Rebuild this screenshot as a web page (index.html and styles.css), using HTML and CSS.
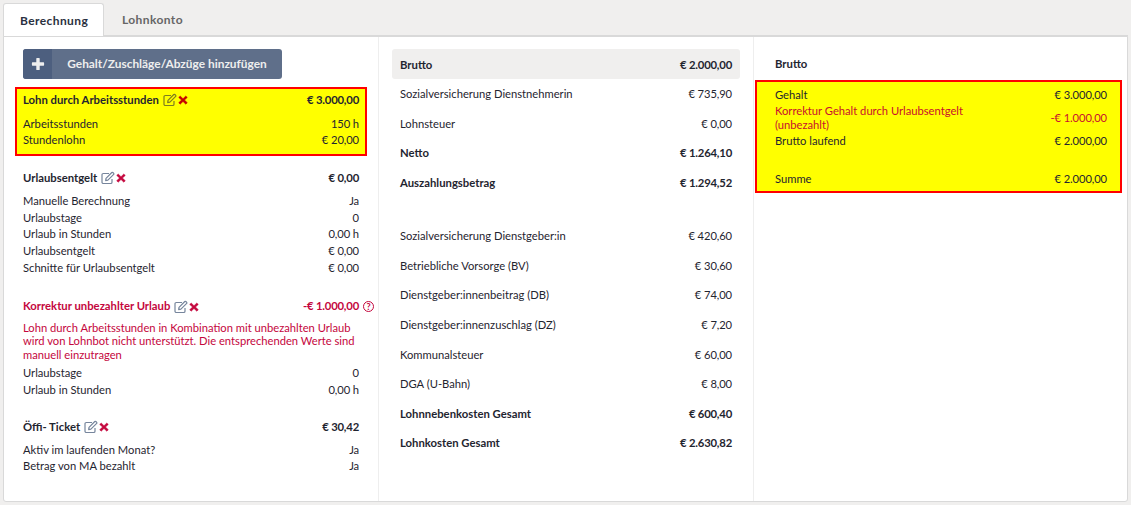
FILE: index.html
```html
<!DOCTYPE html>
<html lang="de">

<head>
    <meta charset="UTF-8">
    <title>Berechnung</title>
    <link rel="stylesheet" href="styles.css">
</head>

<body>
    <svg class="defs" width="0" height="0">
        <symbol id="i-edit" viewBox="0 0 14 14">
            <path d="M11 8v3.2a1.3 1.3 0 0 1-1.3 1.3H2.300A1.300 1.300 0 0 1 1 11.200V3.800a1.300 1.300 0 0 1 1.300-1.300H8" fill="none" stroke="currentColor" stroke-width="1.200"/>
            <path d="M5 7.300 10.800 1.500a.7.700 0 0 1 1 0l.9.900a.7.700 0 0 1 0 1L6.900 9.200 4.700 9.600z" fill="none" stroke="currentColor" stroke-width="1.200" stroke-linejoin="round"/>
        </symbol>
        <symbol id="i-del" viewBox="0 0 10 10">
            <path d="M2.200 1 5 3.700 7.800 1 9.300 2.400 6.500 5.100 9.300 7.700 7.800 9.200 5 6.500 2.200 9.200 .7 7.700 3.500 5.100 .7 2.400z" fill="currentColor" stroke="currentColor" stroke-width=".5" stroke-linejoin="round"/>
        </symbol>
    </svg>

    <div class="tabs">
        <div class="tab active">Berechnung</div>
        <div class="tab">Lohnkonto</div>
    </div>

    <div class="panel">
        <div class="col col-left">
            <button class="add-btn"><span class="add-icon"><svg width="14" height="14" viewBox="0 0 14 14"><path d="M5.300 1.500a.6.600 0 0 1 .6-.6h2.200a.6.600 0 0 1 .6.600v3.800h3.800a.6.600 0 0 1 .6.600v2.200a.6.600 0 0 1-.6.600H8.700v3.800a.6.600 0 0 1-.6.600H5.900a.6.600 0 0 1-.6-.6V8.700H1.500a.6.600 0 0 1-.6-.6V5.900a.6.600 0 0 1 .6-.6h3.800z" fill="#eee"/></svg></span><span class="add-text">Gehalt/Zuschläge/Abzüge hinzufügen</span></button>

            <div class="block mark mark-left">
                <div class="line title">
                    <span class="name">Lohn durch Arbeitsstunden <svg class="ic ic-edit"><use href="#i-edit"/></svg><svg class="ic ic-del"><use href="#i-del"/></svg></span>
                    <span>€ 3.000,00</span>
                </div>
                <div class="line"><span>Arbeitsstunden</span><span>150 h</span></div>
                <div class="line"><span>Stundenlohn</span><span>€ 20,00</span></div>
            </div>

            <div class="block after-mark">
                <div class="line title">
                    <span class="name">Urlaubsentgelt <svg class="ic ic-edit"><use href="#i-edit"/></svg><svg class="ic ic-del"><use href="#i-del"/></svg></span>
                    <span>€ 0,00</span>
                </div>
                <div class="line"><span>Manuelle Berechnung</span><span>Ja</span></div>
                <div class="line"><span>Urlaubstage</span><span>0</span></div>
                <div class="line"><span>Urlaub in Stunden</span><span>0,00 h</span></div>
                <div class="line"><span>Urlaubsentgelt</span><span>€ 0,00</span></div>
                <div class="line"><span>Schnitte für Urlaubsentgelt</span><span>€ 0,00</span></div>
            </div>

            <div class="block">
                <div class="line title red">
                    <span class="name">Korrektur unbezahlter Urlaub <svg class="ic ic-edit"><use href="#i-edit"/></svg><svg class="ic ic-del"><use href="#i-del"/></svg></span>
                    <span>-€ 1.000,00<span class="help">?</span></span>
                </div>
                <p class="note">Lohn durch Arbeitsstunden in Kombination mit unbezahlten Urlaub wird von Lohnbot nicht unterstützt. Die entsprechenden Werte sind manuell einzutragen</p>
                <div class="line"><span>Urlaubstage</span><span>0</span></div>
                <div class="line"><span>Urlaub in Stunden</span><span>0,00 h</span></div>
            </div>

            <div class="block last">
                <div class="line title">
                    <span class="name">Öffi- Ticket <svg class="ic ic-edit"><use href="#i-edit"/></svg><svg class="ic ic-del"><use href="#i-del"/></svg></span>
                    <span>€ 30,42</span>
                </div>
                <div class="line"><span>Aktiv im laufenden Monat?</span><span>Ja</span></div>
                <div class="line"><span>Betrag von MA bezahlt</span><span>Ja</span></div>
            </div>
        </div>

        <div class="col col-mid">
            <div class="row strong first"><span>Brutto</span><span>€ 2.000,00</span></div>
            <div class="row"><span>Sozialversicherung Dienstnehmerin</span><span>€ 735,90</span></div>
            <div class="row"><span>Lohnsteuer</span><span>€ 0,00</span></div>
            <div class="row strong"><span>Netto</span><span>€ 1.264,10</span></div>
            <div class="row strong"><span>Auszahlungsbetrag</span><span>€ 1.294,52</span></div>
            <div class="row-gap"></div>
            <div class="row"><span>Sozialversicherung Dienstgeber:in</span><span>€ 420,60</span></div>
            <div class="row"><span>Betriebliche Vorsorge (BV)</span><span>€ 30,60</span></div>
            <div class="row"><span>Dienstgeber:innenbeitrag (DB)</span><span>€ 74,00</span></div>
            <div class="row"><span>Dienstgeber:innenzuschlag (DZ)</span><span>€ 7,20</span></div>
            <div class="row"><span>Kommunalsteuer</span><span>€ 60,00</span></div>
            <div class="row"><span>DGA (U-Bahn)</span><span>€ 8,00</span></div>
            <div class="row strong"><span>Lohnnebenkosten Gesamt</span><span>€ 600,40</span></div>
            <div class="row strong"><span>Lohnkosten Gesamt</span><span>€ 2.630,82</span></div>
        </div>

        <div class="col col-right">
            <div class="right-head">Brutto</div>
            <div class="mark mark-right">
                <div class="line"><span>Gehalt</span><span>€ 3.000,00</span></div>
                <div class="line wrap red-plain"><span class="wrap-text">Korrektur Gehalt durch Urlaubsentgelt (unbezahlt)</span><span>-€ 1.000,00</span></div>
                <div class="line"><span>Brutto laufend</span><span>€ 2.000,00</span></div>
                <div class="line sum"><span>Summe</span><span>€ 2.000,00</span></div>
            </div>
        </div>
    </div>
</body>

</html>
```

FILE: styles.css
```css
* {
    margin: 0;
    padding: 0;
    box-sizing: border-box;
}

body {
    font-family: "Lato", sans-serif;
    font-size: 11.2px;
    color: #1f2530;
    background: #f0efee;
    padding: 3px 3px 3px 3px;
    height: 505px;
    overflow: hidden;
}

.defs {
    position: absolute;
}

.tabs {
    display: flex;
    height: 33px;
}

.tab {
    padding: 0 18px;
    line-height: 33px;
    font-size: 12px;
    letter-spacing: 0.4px;
    font-weight: 700;
    color: #666;
}

.tab.active {
    width: 101px;
    padding: 0 16px;
    background: #fff;
    color: #2a3140;
    border: 1px solid #d9d9d9;
    border-bottom: none;
    border-radius: 3px 3px 0 0;
}

.panel {
    display: flex;
    width: 1125px;
    height: 466px;
    background: #fff;
    border: 1px solid #d9d9d9;
    border-radius: 0 0 3px 3px;
    box-shadow: 0 -1px 0 #d9d9d9;
}

.col {
    width: 375px;
    border-right: 1px solid #eeeeee;
}

.col-right {
    border-right: none;
    flex: 1;
}

.col-left {
    padding: 12px 19px 0 19px;
}

.add-btn {
    display: flex;
    width: 259px;
    height: 30px;
    border: none;
    border-radius: 3px;
    overflow: hidden;
    background: #5f6f8a;
    font-family: inherit;
    font-size: 11.900px;
    font-weight: 700;
    color: #eee;
}

.add-icon {
    display: flex;
    align-items: center;
    justify-content: center;
    width: 29px;
    height: 30px;
    background: #4d5f7f;
}

.add-text {
    flex: 1;
    line-height: 30px;
    text-align: center;
}

.line {
    display: flex;
    justify-content: space-between;
    align-items: center;
    line-height: 16.800px;
}

.line > span:last-child,
.row > span:last-child {
    letter-spacing: -0.1px;
}

.title > span:last-child,
.row.strong > span:last-child {
    letter-spacing: -0.2px;
}

.block {
    margin-top: 21.500px;
}

.block.after-mark {
    margin-top: 14px;
}

.block.last {
    margin-top: 20.500px;
}

.title {
    font-size: 11.300px;
    font-weight: 700;
    margin-bottom: 6px;
}

.name {
    display: flex;
    align-items: center;
    white-space: pre;
}

.ic {
    flex: none;
}

.ic-edit {
    width: 14px;
    height: 14px;
    margin-left: 1px;
    color: #76859c;
}

.ic-del {
    width: 10px;
    height: 10px;
    margin-left: 1px;
    color: #c4063d;
}

.red {
    color: #c4063d;
}

.note {
    color: #c4063d;
    line-height: 13.400px;
    margin-top: 4px;
    margin-bottom: 3.500px;
}

.help {
    display: inline-block;
    width: 11px;
    height: 11px;
    margin-left: 4px;
    margin-right: -15px;
    border: 1px solid #c4063d;
    border-radius: 50%;
    font-size: 9px;
    line-height: 9px;
    text-align: center;
}

.mark {
    background: #ffff00;
    border: 2px solid #ff0000;
}

.mark-left {
    margin: 8px -8px 0 -8px;
    height: 69px;
    padding: 3px 6px 0 6px;
}

.mark-left .line {
    line-height: 16.500px;
}

.mark-left .ic-edit {
    color: #7d7d20;
}

.mark-left .ic-del {
    color: #c40000;
}

.mark-left .title {
    margin-bottom: 7px;
}

.col-mid {
    padding: 12px 13px 0 13px;
}

.row {
    display: flex;
    justify-content: space-between;
    align-items: center;
    height: 29.600px;
    padding: 0 8px;
}

.row.first {
    height: 30px;
    background: #f0efee;
    border-radius: 3px;
}

.row.strong {
    font-size: 11.300px;
    font-weight: 700;
}

.row-gap {
    height: 23.500px;
}

.right-head {
    height: 43px;
    padding: 19px 0 0 21px;
    font-size: 11.300px;
    font-weight: 700;
    line-height: 16px;
}

.mark-right {
    margin: 0 5px 0 1px;
    height: 113px;
    padding: 4.500px 13px 0 18px;
}

.wrap {
    line-height: 13.300px;
    margin: 1px 0 2px;
}

.red-plain {
    color: #c8102e;
}

.wrap-text {
    width: 225px;
}

.sum {
    margin-top: 21px;
}
```
